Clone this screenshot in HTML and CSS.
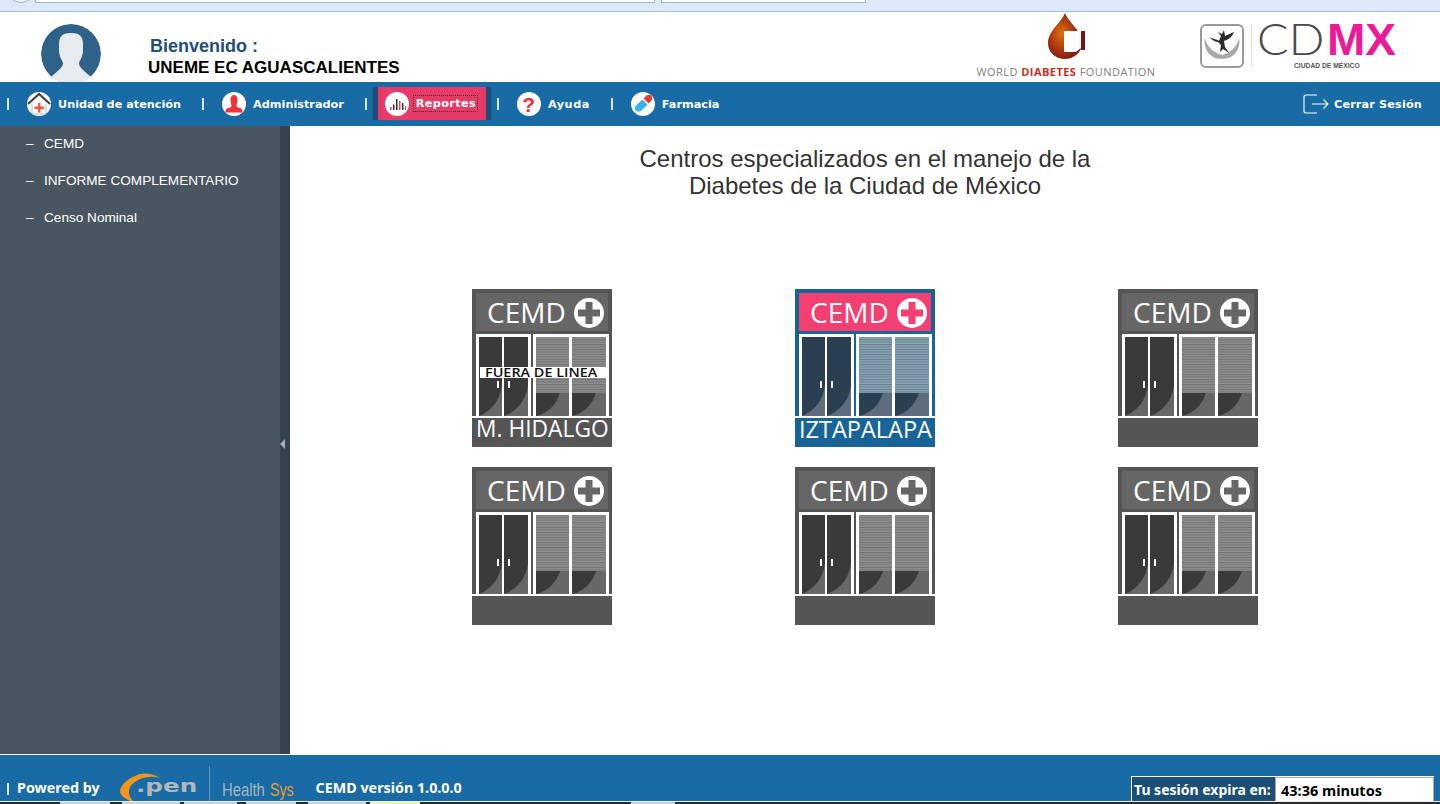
FILE: index.html
```html
<!DOCTYPE html>
<html lang="es">
<head>
  <meta charset="UTF-8" />
  <title>CEMD</title>
  <link rel="stylesheet" href="styles.css">
</head>
<body>
  <svg class="defs" width="0" height="0">
    <defs>
      <pattern id="blindGray" width="4" height="2.5" patternUnits="userSpaceOnUse">
        <rect width="4" height="2.5" fill="#8f8f8f"/>
        <rect width="4" height="1" fill="#727272"/>
      </pattern>
      <pattern id="blindBlue" width="4" height="2.5" patternUnits="userSpaceOnUse">
        <rect width="4" height="2.5" fill="#8ca5b5"/>
        <rect width="4" height="1" fill="#64808f"/>
      </pattern>
      <radialGradient id="dropFill" cx="0.4" cy="0.45" r="0.7">
        <stop offset="0" stop-color="#e0720f"/>
        <stop offset="0.55" stop-color="#a5300f"/>
        <stop offset="1" stop-color="#6d120c"/>
      </radialGradient>
      <clipPath id="avatarClip"><circle cx="30" cy="30" r="30"/></clipPath>
      <symbol id="cemdShop" viewBox="0 0 140 158">
        <rect width="140" height="158" style="fill:var(--body)"/>
        <rect x="4" y="4" width="132" height="38" style="fill:var(--banner)"/>
        <text class="shop-title" x="15" y="34">CEMD</text>
        <circle cx="117" cy="24" r="15" fill="#fff"/>
        <path d="M113.500 13h7v7.500h7.500v7h-7.500v7.500h-7v-7.500h-7.500v-7h7.500z" style="fill:var(--banner)"/>
        <rect x="4" y="45" width="55" height="83" fill="#fff"/>
        <rect x="61" y="45" width="76" height="83" fill="#fff"/>
        <rect x="7" y="48" width="23" height="79" style="fill:var(--door)"/>
        <rect x="32" y="48" width="24" height="79" style="fill:var(--door)"/>
        <path d="M7 127C19 122 28 112 30 96V127Z" style="fill:var(--wedge)"/>
        <path d="M32 127C45 122 54 112 56 96V127Z" style="fill:var(--wedge)"/>
        <rect x="25" y="92" width="2" height="7" fill="#fff"/>
        <rect x="36" y="92" width="2" height="7" fill="#fff"/>
        <rect x="64" y="48" width="33" height="56" style="fill:var(--blind)"/>
        <rect x="100" y="48" width="34" height="56" style="fill:var(--blind)"/>
        <rect x="64" y="104" width="33" height="23" style="fill:var(--wedge)"/>
        <rect x="100" y="104" width="34" height="23" style="fill:var(--wedge)"/>
        <path d="M64 127V104H88C84 116 76 124 64 127Z" style="fill:var(--door)"/>
        <path d="M100 127V104H124C120 116 112 124 100 127Z" style="fill:var(--door)"/>
        <rect y="127" width="140" height="2" fill="#fff"/>
      </symbol>
    </defs>
  </svg>

  <div class="browser-strip">
    <span class="browser-round"></span>
    <span class="browser-field browser-field-url"></span>
    <span class="browser-field browser-field-search"></span>
  </div>

  <header class="top-header">
    <svg class="avatar" viewBox="0 0 60 58" width="60" height="58">
      <g clip-path="url(#avatarClip)">
        <circle cx="30" cy="30" r="30" fill="#2e6288"/>
        <path d="M18 20C18 12 22 9 30 9S42 12 42 20V26C42 32 39 36 38 39 38 43 42 46 49 52L54 62H6L11 52C18 46 22 43 22 39 21 36 18 32 18 26Z" fill="#e8ecef"/>
      </g>
    </svg>
    <div class="welcome">
      <div class="welcome-label">Bienvenido :</div>
      <div class="welcome-unit">UNEME EC AGUASCALIENTES</div>
    </div>
    <div class="wdf-logo">
      <svg viewBox="0 0 42 48" width="42" height="48">
        <path d="M35 18h4v19h-4z" fill="#7a150e"/>
        <path d="M19 0C15 10 2 18 2 30c0 10 8 16 17 16 8 0 17-6 17-16C36 18 23 10 19 0Z" fill="url(#dropFill)"/>
        <path d="M18 18h17v17l-5 4H18z" fill="#fff"/>
      </svg>
      <div class="wdf-name">WORLD <b>DIABETES</b> FOUNDATION</div>
    </div>
    <svg class="cdmx-logo" viewBox="0 -12 240 70" width="240" height="70">
      <rect x="1" y="1" width="42" height="42" rx="5" fill="#fff" stroke="#9a9a9a" stroke-width="2"/>
      <path d="M5 14c2 9 9 15 17 17 8-2 15-8 17-17 2 10-4 21-17 21S3 24 5 14Z" fill="#a9a9a9"/>
      <path d="M9 13c3 2 8 2 10 4l2-5-3-4 4 2 2-4 1 6 9-4c-2 6-7 8-10 9l1 6 4 6-6-4-3 3 1-7-3-3c-3 0-7-3-9-5z" fill="#2b2b2b"/>
      <rect x="51" y="0" width="1" height="44" fill="#e2e2e2"/>
      <text class="cdmx-cd" transform="translate(57 31) scale(1.09 1)">CD</text>
      <text class="cdmx-mx" transform="translate(127 31) scale(1.045 1)">MX</text>
      <text class="cdmx-sub" transform="translate(94 44) scale(.96 1)">CIUDAD DE MÉXICO</text>
    </svg>
  </header>

  <nav class="main-nav">
    <span class="nav-sep"></span>
    <a class="nav-item">
      <svg class="nav-icon" viewBox="0 0 24 24"><circle cx="12" cy="12" r="12" fill="#fff"/><path d="M1 12 12 2l11 10" fill="none" stroke="#444" stroke-width="2.200"/><path d="M5 12v10h14V12" fill="none" stroke="#bbb"/><path d="M11 11h2.500v3.500H17V17h-3.500v3.500H11V17H7.500v-2.500H11z" fill="#ee5a3c"/></svg>
      Unidad de atención
    </a>
    <span class="nav-sep"></span>
    <a class="nav-item">
      <svg class="nav-icon" viewBox="0 0 24 24"><circle cx="12" cy="12" r="12" fill="#fff"/><path d="M8.500 7.500c0-3 1.500-4.500 3.500-4.500s3.500 1.500 3.500 4.500c0 3-1 5-1 6 0 1.500 1 2 4.500 3 1 .5 1.500 2 1.500 4h-17c0-2 .5-3.500 1.500-4 3.500-1 4.500-1.500 4.500-3 0-1-1-3-1-6z" fill="#ee3338"/></svg>
      Administrador
    </a>
    <span class="nav-sep"></span>
    <a class="nav-item nav-item-active">
      <svg class="nav-icon" viewBox="0 0 24 24"><circle cx="12" cy="12" r="12" fill="#fff"/><path d="M5 15h1.500v3H5z" fill="#e8483c"/><path d="M8 12.500h1.500V18H8z" fill="#333"/><path d="M11 7h1.500v11H11z" fill="#333"/><path d="M14 9h1.500v9H14z" fill="#e8483c"/><path d="M17 11h1.500v7H17z" fill="#333"/><path d="M20 14h1v4h-1z" fill="#e8483c"/></svg>
      <span class="nav-focus">Reportes</span>
    </a>
    <span class="nav-sep"></span>
    <a class="nav-item nav-item-help">
      <svg class="nav-icon" viewBox="0 0 24 24"><circle cx="12" cy="12" r="12" fill="#fff"/><text class="help-mark" x="12" y="20">?</text></svg>
      Ayuda
    </a>
    <span class="nav-sep"></span>
    <a class="nav-item">
      <svg class="nav-icon" viewBox="0 0 24 24"><circle cx="12" cy="12" r="12" fill="#fff"/><path d="M12.500 6.500 15 4c2-2 4.500-1.500 5.500 0s1 3.500-.5 5l-2.500 2.500z" fill="#e63c34"/><path d="M11.500 7.500l5 5L11 18c-2 2-4.500 2-6 .5s-1.500-4 .5-5.500z" fill="#35b4e6"/></svg>
      Farmacia
    </a>
    <a class="nav-logout">
      <svg viewBox="0 0 26 20" width="26" height="20" fill="none" stroke="#fff" stroke-width="1.100"><path d="M14 1H3a2 2 0 0 0-2 2v14a2 2 0 0 0 2 2h11"/><path d="M9 10h16M20.500 5.500 25 10l-4.500 4.500"/></svg>
      Cerrar Sesión
    </a>
  </nav>

  <div class="page-body">
    <aside class="side-menu">
      <ul class="side-list">
        <li>CEMD</li>
        <li>INFORME COMPLEMENTARIO</li>
        <li>Censo Nominal</li>
      </ul>
      <div class="side-handle"><span class="side-arrow"></span></div>
    </aside>
    <main class="content">
      <h1 class="content-title">Centros especializados en el manejo de la<br>Diabetes de la Ciudad de México</h1>
      <div class="shop-grid">
        <svg class="shop shop-gray" viewBox="0 0 140 158">
          <use href="#cemdShop"/>
          <rect x="8" y="78" width="126" height="11" fill="#fff"/>
          <text class="shop-offline" transform="translate(13 87.500) scale(1.2 1)">FUERA DE LINEA</text>
          <text class="shop-name" transform="translate(4 148) scale(.95 1)">M. HIDALGO</text>
        </svg>
        <svg class="shop shop-blue" viewBox="0 0 140 158">
          <use href="#cemdShop"/>
          <text class="shop-name" transform="translate(4 149) scale(.98 1)">IZTAPALAPA</text>
        </svg>
        <svg class="shop shop-gray" viewBox="0 0 140 158"><use href="#cemdShop"/></svg>
        <svg class="shop shop-gray" viewBox="0 0 140 158"><use href="#cemdShop"/></svg>
        <svg class="shop shop-gray" viewBox="0 0 140 158"><use href="#cemdShop"/></svg>
        <svg class="shop shop-gray" viewBox="0 0 140 158"><use href="#cemdShop"/></svg>
      </div>
    </main>
  </div>

  <footer class="page-footer">
    <span class="nav-sep"></span>
    <span class="powered">Powered by</span>
    <svg class="open-logo" viewBox="0 0 190 40" width="190" height="40">
      <path d="M40 17C32 12 22 11 15 15 6 19 0 25 0 31 1 35 5 38 11 40H13C9 36 8 31 10 26 14 19 28 13 40 17Z" fill="#f7941d"/>
      <text class="open-word" transform="translate(16 31) scale(1.45 1)">.pen</text>
      <rect x="89" y="5" width="1" height="35" fill="#5f93b8"/>
      <text class="health-word" transform="translate(102 35) scale(.78 1)">Health</text>
      <text class="sys-word" transform="translate(150 35) scale(.75 1)">Sys</text>
    </svg>
    <span class="version">CEMD versión 1.0.0.0</span>
    <div class="session-box">
      <span class="session-label">Tu sesión expira en:</span>
      <span class="session-time">43:36 minutos</span>
    </div>
  </footer>

  <div class="taskbar">
    <span class="task-tab task-tab-a"></span>
    <span class="task-tab task-tab-b"></span>
    <span class="task-tab task-tab-c"></span>
    <span class="task-tab task-tab-d"></span>
    <span class="task-tab task-tab-b"></span>
    <span class="task-tab task-tab-on"></span>
    <span class="task-tab task-tab-last"></span>
  </div>
</body>
</html>
```

FILE: styles.css
```css
:root {
  --blue: #186ba5;
  --blue-dark: #1b4f75;
  --pink: #e83a66;
  --side: #4a5562;
  --side-dark: #36424f;
}

* {
  box-sizing: border-box;
}

html, body {
  height: 804px;
  margin: 0;
  overflow: hidden;
}

body {
  display: flex;
  flex-direction: column;
  font-family: "Liberation Sans", Arial, sans-serif;
  background: #fff;
}

.defs {
  position: absolute;
}

/* browser chrome left at the top of the capture */
.browser-strip {
  flex: 0 0 12px;
  display: flex;
  align-items: flex-start;
  background: #dce9f8;
  border-bottom: 1px solid #adbdd2;
  overflow: hidden;
}

.browser-round {
  width: 28px;
  height: 28px;
  margin: -25px 0 0 7px;
  border: 1px solid #a9b5c6;
  border-radius: 50%;
  background: #f2f5f9;
}

.browser-field {
  height: 3px;
  background: #fff;
  border: 1px solid #a9b5c6;
  border-top: 0;
}

.browser-field-url {
  width: 620px;
}

.browser-field-search {
  width: 205px;
  margin-left: 6px;
}

.top-header {
  flex: 0 0 70px;
  display: flex;
  align-items: flex-start;
  overflow: hidden;
}

.avatar {
  flex: none;
  margin: 12px 0 0 41px;
}

.welcome {
  margin: 24px 0 0 47px;
  font-weight: bold;
  line-height: 21px;
}

.welcome-label {
  margin-left: 2px;
  font-size: 18px;
  color: #1f4e79;
}

.welcome-unit {
  font-size: 17px;
  color: #000;
}

.wdf-logo {
  flex: 0 0 180px;
  margin: 1px 0 0 auto;
  display: flex;
  flex-direction: column;
  align-items: center;
}

.wdf-logo svg {
  display: block;
  margin-left: 2px;
}

.wdf-name {
  margin-top: 4px;
  font-family: "Open Sans", sans-serif;
  font-size: 11px;
  line-height: 14px;
  letter-spacing: 0.450px;
  color: #7d7d7d;
  white-space: nowrap;
}

.wdf-name b {
  color: #c1301c;
}

.cdmx-logo {
  flex: none;
  display: block;
  margin: 0 0 0 44px;
}

.cdmx-cd {
  font-family: "Lato", sans-serif;
  font-size: 43px;
  font-weight: 300;
  fill: #4a4a4a;
}

.cdmx-mx {
  font-family: "Liberation Sans", sans-serif;
  font-size: 44px;
  font-weight: bold;
  fill: #ec1a96;
}

.cdmx-sub {
  font-family: "Liberation Sans", sans-serif;
  font-size: 7px;
  font-weight: bold;
  fill: #555;
}

.main-nav {
  flex: 0 0 44px;
  display: flex;
  align-items: center;
  padding: 0 18px 0 7px;
  background: var(--blue);
  font-family: "DejaVu Sans", Verdana, sans-serif;
  font-size: 11.250px;
  font-weight: bold;
  color: #fff;
}

.nav-sep {
  flex: none;
  width: 2px;
  height: 12px;
  background: #dbe8f2;
}

.nav-item {
  display: flex;
  align-items: center;
  gap: 7px;
  padding: 0 21px 0 18px;
  white-space: nowrap;
}

.nav-item-help {
  letter-spacing: 0.500px;
}

.nav-item-active {
  height: 33px;
  margin: 5px 6px 0;
  padding: 0 9px 0 7px;
  gap: 5px;
  background: var(--pink);
  border: solid var(--blue-dark);
  border-width: 0 5px;
  align-self: flex-start;
}

.nav-focus {
  padding: 1px 1px 1px 2px;
  letter-spacing: 0.350px;
  outline: 1px dotted #222;
  outline-offset: 0;
}

.nav-icon {
  flex: none;
  width: 24px;
  height: 24px;
}

.help-mark {
  font-family: "Liberation Sans", sans-serif;
  font-size: 21px;
  font-weight: bold;
  text-anchor: middle;
  fill: #ee3338;
}

.nav-logout {
  margin-left: auto;
  display: flex;
  align-items: center;
  gap: 5px;
  letter-spacing: 0.150px;
}

.page-body {
  flex: 0 0 628px;
  display: flex;
  min-height: 0;
}

.side-menu {
  flex: 0 0 290px;
  display: flex;
  background: var(--side);
}

.side-list {
  flex: 1;
  margin: -1px 0 0;
  padding: 0 0 0 26px;
  list-style: none;
  font-size: 13.600px;
  line-height: 37px;
  color: #fff;
}

.side-list li::before {
  content: "–";
  display: inline-block;
  width: 18px;
}

.side-handle {
  flex: 0 0 10px;
  display: flex;
  align-items: center;
  background: var(--side-dark);
}

.side-arrow {
  width: 0;
  height: 0;
  border: 5px solid transparent;
  border-left-width: 0;
  border-right: 5px solid #a6adb5;
  margin-top: 8px;
}

.content {
  flex: 1;
  display: flex;
  flex-direction: column;
  align-items: center;
}

.content-title {
  margin: 19px 0 0;
  font-size: 24px;
  font-weight: normal;
  line-height: 27px;
  text-align: center;
  color: #333;
}

.shop-grid {
  margin-top: 90px;
  display: grid;
  grid-template-columns: repeat(3, 140px);
  column-gap: 183px;
  row-gap: 20px;
}

.shop {
  display: block;
  width: 140px;
  height: 158px;
}

.shop-gray {
  --body: #555;
  --banner: #666;
  --door: #3a3a3a;
  --wedge: #676767;
  --blind: url(#blindGray);
}

.shop-blue {
  --body: #186496;
  --banner: #f43f73;
  --door: #2b3f52;
  --wedge: #5d6d7d;
  --blind: url(#blindBlue);
}

.shop-title {
  font-family: "Open Sans", sans-serif;
  font-size: 28px;
  fill: #fff;
}

.shop-offline {
  font-family: "Open Sans", sans-serif;
  font-size: 12px;
  font-weight: 600;
  fill: #111;
}

.shop-name {
  font-family: "Open Sans", sans-serif;
  font-size: 24px;
  fill: #fff;
}

.page-footer {
  flex: 0 0 46px;
  display: flex;
  align-items: flex-end;
  margin-top: 1px;
  padding-left: 7px;
  background: var(--blue);
  font-family: "Noto Sans", Tahoma, sans-serif;
  font-size: 14.300px;
  font-weight: bold;
  color: #fff;
}

.page-footer .nav-sep {
  margin-bottom: 6px;
}

.powered {
  margin: 0 0 5px 8px;
  line-height: 16px;
}

.open-logo {
  flex: none;
  display: block;
  margin: 0 0 0 20px;
}

.open-word {
  font-family: "DejaVu Sans", sans-serif;
  font-size: 17px;
  font-weight: bold;
  fill: #b4b8bb;
}

.health-word {
  font-family: "Liberation Sans", sans-serif;
  font-size: 19px;
  font-weight: normal;
  fill: #a9b4bc;
}

.sys-word {
  font-family: "Liberation Sans", sans-serif;
  font-size: 19px;
  font-weight: normal;
  fill: #f39a1f;
}

.version {
  margin: 0 0 5px 6px;
  line-height: 16px;
}

.session-box {
  display: flex;
  align-self: flex-end;
  margin: 0 6px 0 auto;
  width: 303px;
  height: 25px;
  padding: 1px 0 0 1px;
  background: #fff;
  font-size: 14px;
  line-height: 26px;
}

.session-label {
  flex: 0 0 143px;
  padding-left: 2px;
  background: var(--blue-dark);
  white-space: nowrap;
}

.session-time {
  flex: 1;
  padding-left: 5px;
  border: 1px solid #aaa;
  border-bottom: 0;
  font-size: 14.500px;
  color: #000;
  line-height: 24px;
}

.taskbar {
  flex: 0 0 4px;
  display: flex;
  padding-left: 60px;
  background: #2a2a2a;
  border-top: 1px solid #eee;
  overflow: hidden;
}

.task-tab {
  background: #cfcfcf;
}

.task-tab-a {
  width: 50px;
}

.task-tab-b {
  width: 58px;
  margin-left: 12px;
}

.task-tab-c {
  width: 53px;
  margin-left: 4px;
}

.task-tab-d {
  width: 50px;
  margin-left: 9px;
}

.task-tab-on {
  width: 50px;
  margin-left: 4px;
  background: #f4eeb0;
}

.task-tab-last {
  width: 44px;
  margin-left: 211px;
}
```
